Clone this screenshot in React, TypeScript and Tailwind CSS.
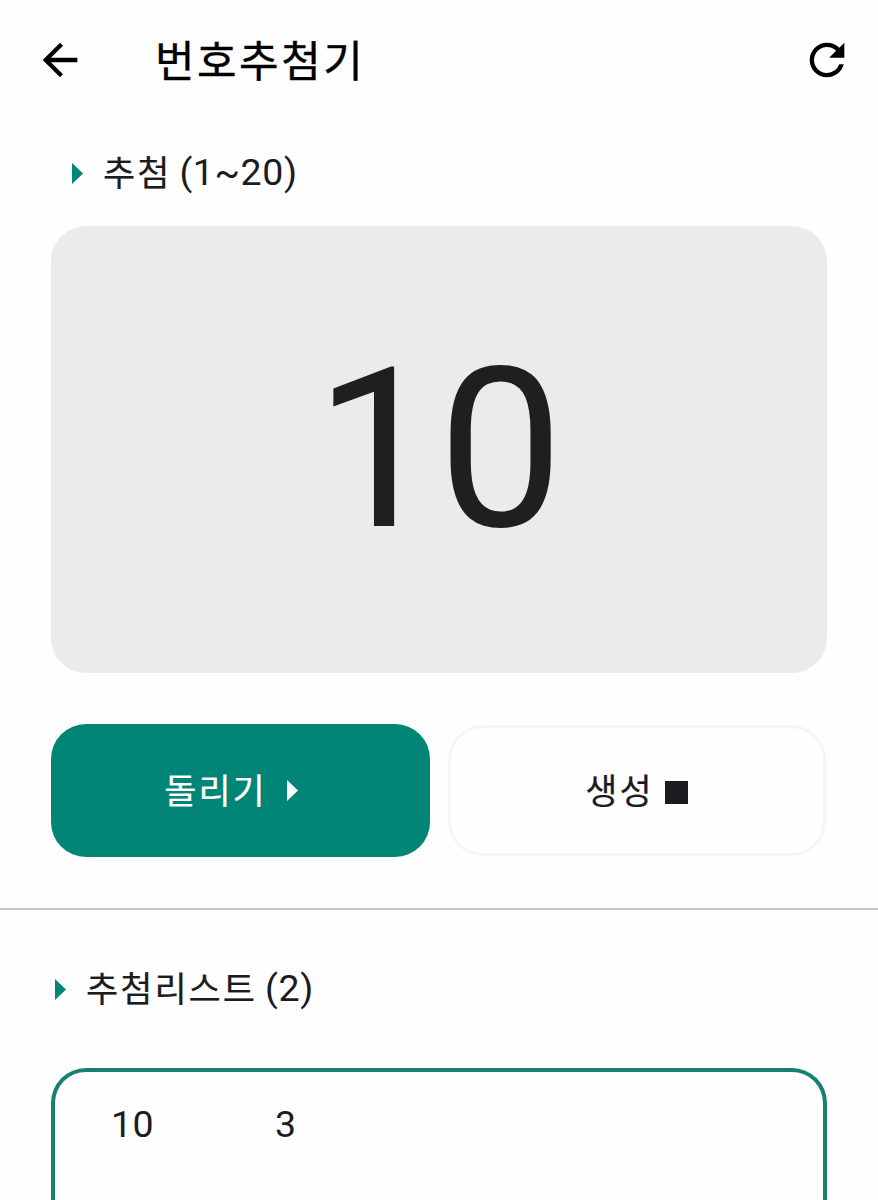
import type { ReactNode } from 'react';
import { MdArrowBack, MdRefresh } from 'react-icons/md';

interface SectionTitleProps {
  label: string;
  suffix: string;
  className: string;
}

function Triangle({ className }: { className: string }) {
  return (
    <svg viewBox="0 0 11 21" className={`w-[11px] h-[21px] shrink-0 ${className}`} fill="currentColor">
      <path d="M0 0L11 10.5L0 21Z" />
    </svg>
  );
}

// Hangul runs are set slightly smaller and looser than the digits
function Hangul({ children }: { children: ReactNode }) {
  return (
    <span className="pt-[3px] text-[35px] leading-[51px] tracking-[2px] [-webkit-text-stroke:0.2px_currentColor]">
      {children}
    </span>
  );
}

function SectionTitle({ label, suffix, className }: SectionTitleProps) {
  return (
    <h2 className={`flex items-center h-[54px] ${className}`}>
      <Triangle className="text-[#018577] mr-5" />
      <Hangul>{label}</Hangul>
      <span className="ml-[8px] pb-[2px] text-[37.5px] leading-[54px] tracking-[0.6px]">{suffix}</span>
    </h2>
  );
}

export default function App() {
  const drawn = [10, 3];

  return (
    <div className="w-full h-[1200px] overflow-hidden flex flex-col bg-[#fefefe] text-[#1c1b1f] font-[Roboto,'Noto_Sans_CJK_KR',sans-serif]">
      <header className="h-[120px] shrink-0 flex items-center pl-[34px] pr-[25px] text-black">
        <button>
          <MdArrowBack className="w-[52px] h-[52px]" />
        </button>
        <h1 className="flex-1 ml-[69px] pt-[3px] text-[43px] leading-[68px] tracking-[2.5px] [-webkit-text-stroke:0.4px_currentColor]">
          번호추첨기
        </h1>
        <button>
          <MdRefresh className="w-[52px] h-[52px]" />
        </button>
      </header>

      <section className="shrink-0 px-[51px] pt-[26px]">
        <SectionTitle label="추첨" suffix="(1~20)" className="pl-[21px]" />

        <div className="mt-[26px] h-[447px] pr-[2px] rounded-[35px] bg-[#ebebeb] flex items-center justify-center">
          <span className="text-[223px] leading-none tracking-[-2px] text-[#1f1f1f]">{drawn[0]}</span>
        </div>

        <div className="mt-[51px] flex gap-[18px]">
          <button className="w-[379px] h-[133px] pr-[19px] rounded-[35px] bg-[#018577] text-white flex items-center justify-center">
            <Hangul>돌리기</Hangul>
            <Triangle className="ml-[20px]" />
          </button>
          <button className="w-[378px] h-[131px] mt-px pr-px rounded-[35px] border-3 border-[#f5f5f9] flex items-center justify-center">
            <Hangul>생성</Hangul>
            <span className="ml-[11px] mt-[3px] w-[23px] h-[23px] bg-[#1c1b1f]" />
          </button>
        </div>
      </section>

      <hr className="mt-[51px] shrink-0 border-0 h-[2px] bg-[#cac4d0]" />

      <section className="flex-1 flex flex-col px-[51px] pt-[52px]">
        <SectionTitle label="추첨리스트" suffix="(2)" className="pl-1" />

        <div className="mt-[52px] h-[200px] shrink-0 rounded-t-[35px] border-4 border-b-0 border-[#178071] pt-[25px] pl-[56px] flex text-[37.5px] leading-[54px] tracking-[0.4px]">
          {drawn.map((n) => (
            <span key={n} className="w-[164px]">{n}</span>
          ))}
        </div>
      </section>
    </div>
  );
}
